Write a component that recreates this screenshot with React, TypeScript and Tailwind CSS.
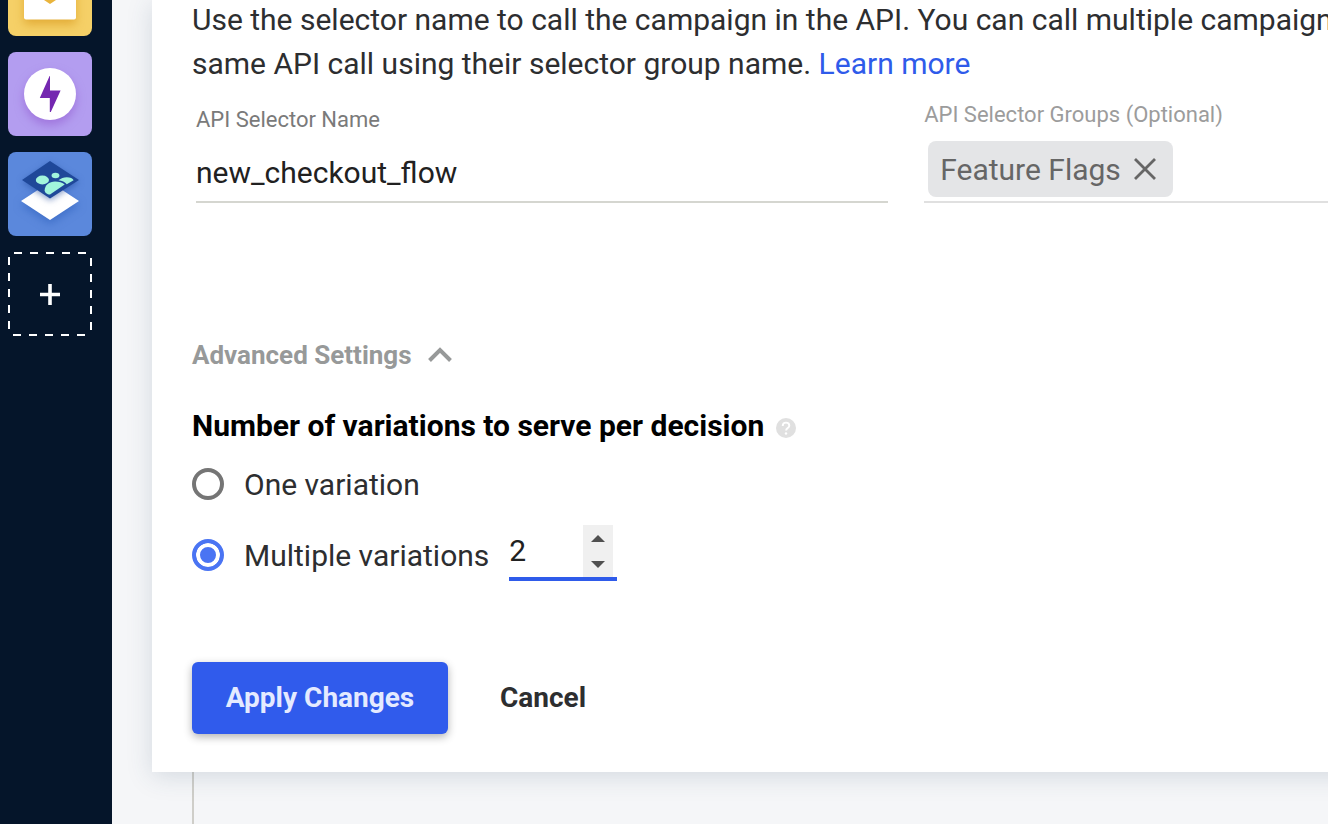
import { useState } from 'react';
import type { ReactNode } from 'react';

type TileProps = {
  label: string;
  className: string;
  children: ReactNode;
};

function Tile({ label, className, children }: TileProps) {
  return (
    <button type="button" aria-label={label} className={`h-21 w-21 shrink-0 rounded-lg ${className}`}>
      {children}
    </button>
  );
}

function Sidebar() {
  return (
    <nav className="flex w-28 shrink-0 flex-col gap-4 bg-[#05152a] pl-2">
      <Tile label="Email" className="-mt-12 bg-[#f5d067]">
        <svg viewBox="0 0 84 84" className="h-full w-full">
          <rect x="16" y="20" width="52" height="47.5" rx="2" fill="#fff" className="drop-shadow-[0_5px_5px_#d99a20aa]" />
          <path d="M36 46h12v2l-6 4-6-4z" fill="#e9b43c" />
        </svg>
      </Tile>
      <Tile label="Experiences" className="bg-[#b39df0]">
        <svg viewBox="0 0 84 84" className="h-full w-full">
          <circle cx="42" cy="42" r="26" fill="#fff" className="drop-shadow-[0_5px_5px_#8f52cc88]" />
          <path d="M41.6 24 31.8 46h10v14h1l9.8-21.4H42V24z" fill="#7427b0" />
        </svg>
      </Tile>
      <Tile label="Audiences" className="bg-[#5b88dc]">
        <svg viewBox="0 0 84 84" className="h-full w-full">
          <path d="M13 49 42 30l29 19-29 19z" fill="#fff" className="drop-shadow-[0_4px_4px_#2f61bd99]" />
          <g className="drop-shadow-[0_2px_3px_#1e489988]">
            <path d="M14 28 42 9l29 19-29 18.5z" fill="#1f4899" />
          </g>
          <ellipse cx="34.4" cy="28" rx="6.6" ry="4.4" fill="#a2f5dc" />
          <ellipse cx="47.5" cy="23.5" rx="3.9" ry="2.7" fill="#a2f5dc" />
          <path d="M42 42.5c-3 0-5.3-1.6-5.3-4.2 0-5 4.5-8.8 10.4-8.8 3.8 0 7.7 1.1 9.6 3.1z" fill="#a2f5dc" />
          <path d="M50.5 28.2c2.7-2 5-3 8.3-3 3.3 0 6.1 1.1 6.8 3l-6.8 4c-1.8-2.2-4.8-3.5-8.3-4z" fill="#a2f5dc" />
        </svg>
      </Tile>
      <Tile label="Add" className="">
        <svg viewBox="0 0 84 84" className="h-full w-full" stroke="#fff" strokeWidth="2">
          <path d="M6 1h73M5 83h74M1 5v74M83 6v73" strokeDasharray="8 8" />
          <path d="M42 32v21M32 42.5h20" strokeWidth="3.6" />
        </svg>
      </Tile>
    </nav>
  );
}

export default function App() {
  const [selectorName, setSelectorName] = useState('new_checkout_flow');
  const [groups, setGroups] = useState(['Feature Flags']);
  const [open, setOpen] = useState(true);
  const [mode, setMode] = useState('multiple');
  const [count, setCount] = useState(2);

  const radioClass =
    'h-8 w-8 shrink-0 appearance-none rounded-full border-4 border-[#757575] bg-white checked:border-[#4a74f3] checked:bg-[#4a74f3] checked:shadow-[inset_0_0_0_4px_white]';

  return (
    <div className="flex min-h-screen overflow-hidden bg-[#f5f6f8] font-[Roboto,sans-serif] text-[#2d2e30]">
      <Sidebar />
      <main className="flex min-w-0 flex-1 flex-col pl-10">
        <section className="relative -mr-10 bg-white pr-10 pb-[38px] pl-10 shadow-[0_4px_24px_rgba(50,75,105,0.17)]">
          <p className="-mt-0.5 text-[30px] leading-11 whitespace-nowrap">
            Use the selector name to call the campaign in the API. You can call multiple campaign
            <br />
            same API call using their selector group name.{' '}
            <a href="#learn-more" className="text-[#2f5bea]">Learn more</a>
          </p>

          <div className="mt-4 grid grid-cols-[12fr_7fr] gap-9 pl-1">
            <div className="flex flex-col justify-between border-b-2 border-[#d5d6d0]">
              <label htmlFor="selector-name" className="pt-1 text-[22px] leading-7 text-[#7a7a7a]">API Selector Name</label>
              <input
                id="selector-name"
                value={selectorName}
                onChange={(e) => setSelectorName(e.target.value)}
                className="mb-[7px] h-11 w-full text-[30px] text-[#212121] outline-none"
              />
            </div>
            <div className="border-b-2 border-[#e0e0e0] pb-1">
              <p className="text-[22px] leading-[26px] text-[#9c9c9c]">API Selector Groups (Optional)</p>
              <div className="mt-[13px] flex h-14 gap-2 pl-1">
                {groups.map((group) => (
                  <span key={group} className="flex items-center gap-3 rounded-lg bg-[#e4e5e7] pr-4 pl-3 text-[30px] text-[#666]">
                    {group}
                    <button
                      type="button"
                      aria-label={`Remove ${group}`}
                      onClick={() => setGroups((current) => current.filter((item) => item !== group))}
                    >
                      <svg viewBox="0 0 24 24" className="h-6 w-6" stroke="currentColor" strokeWidth="2.8">
                        <path d="M2 2l20 20M22 2 2 22" />
                      </svg>
                    </button>
                  </span>
                ))}
              </div>
            </div>
          </div>

          <button
            type="button"
            onClick={() => setOpen(!open)}
            className="mt-[136px] flex items-center gap-4 text-[26px] leading-8 font-bold text-[#979999]"
          >
            Advanced Settings
            <svg viewBox="0 0 24 16" className={`h-4 w-6 ${open ? '' : 'rotate-180'}`} fill="none" stroke="currentColor" strokeWidth="4">
              <path d="M1.5 13.5 12 3l10.5 10.5" />
            </svg>
          </button>

          {open && (
            <fieldset className="mt-[37px]">
              <legend className="flex items-center gap-3 text-[30px] leading-9 font-bold text-black">
                Number of variations to serve per decision
                <svg viewBox="0 0 20 20" className="mt-1 h-5 w-5">
                  <circle cx="10" cy="10" r="10" fill="#e0e0e0" />
                  <path d="M6.7 8c0-2 1.4-3.4 3.3-3.4s3.3 1.3 3.3 3.1c0 2.3-3.2 2.4-3.2 4.8" fill="none" stroke="#fff" strokeWidth="1.9" />
                  <circle cx="10" cy="15.5" r="1.2" fill="#fff" />
                </svg>
              </legend>
              <label className="mt-6 flex h-8 w-fit items-center gap-5 text-[30px]">
                <input
                  type="radio"
                  name="variations"
                  checked={mode === 'one'}
                  onChange={() => setMode('one')}
                  className={radioClass}
                />
                One variation
              </label>
              <div className="mt-[25px] flex gap-5">
                <label className="flex items-center gap-5 pt-1 text-[30px]">
                  <input
                    type="radio"
                    name="variations"
                    checked={mode === 'multiple'}
                    onChange={() => setMode('multiple')}
                    className={radioClass}
                  />
                  Multiple variations
                </label>
                <div className="flex w-27 border-b-4 border-[#2f5bea] pr-1">
                  <input
                    type="number"
                    aria-label="Number of variations"
                    min={1}
                    value={count}
                    onChange={(e) => setCount(Number(e.target.value))}
                    className="h-13 w-0 flex-1 [appearance:textfield] pb-0.5 text-[30px] text-[#212121] outline-none"
                  />
                  <div className="flex w-[30px] flex-col bg-[#f0f0f0] text-[#505050]">
                    <button type="button" aria-label="Increase" onClick={() => setCount(count + 1)} className="flex flex-1 items-center justify-center">
                      <svg viewBox="0 0 14 7" className="h-[7px] w-3.5" fill="currentColor"><path d="M0 7 7 0l7 7z" /></svg>
                    </button>
                    <button type="button" aria-label="Decrease" onClick={() => setCount(Math.max(1, count - 1))} className="flex flex-1 items-center justify-center">
                      <svg viewBox="0 0 14 7" className="h-[7px] w-3.5" fill="currentColor"><path d="M0 0h14L7 7z" /></svg>
                    </button>
                  </div>
                </div>
              </div>
            </fieldset>
          )}

          <div className="mt-[81px] flex gap-5">
            <button type="button" className="h-18 w-64 rounded-md bg-[#305bec] text-[28px] font-bold text-[#e4eaff] shadow-[0_3px_8px_rgba(0,0,0,0.3)]">
              Apply Changes
            </button>
            <button type="button" className="h-18 px-8 text-[28px] font-bold">
              Cancel
            </button>
          </div>
        </section>
        <div className="ml-10 min-h-13 flex-1 border-l-2 border-[#cfcec9]" />
      </main>
    </div>
  );
}
